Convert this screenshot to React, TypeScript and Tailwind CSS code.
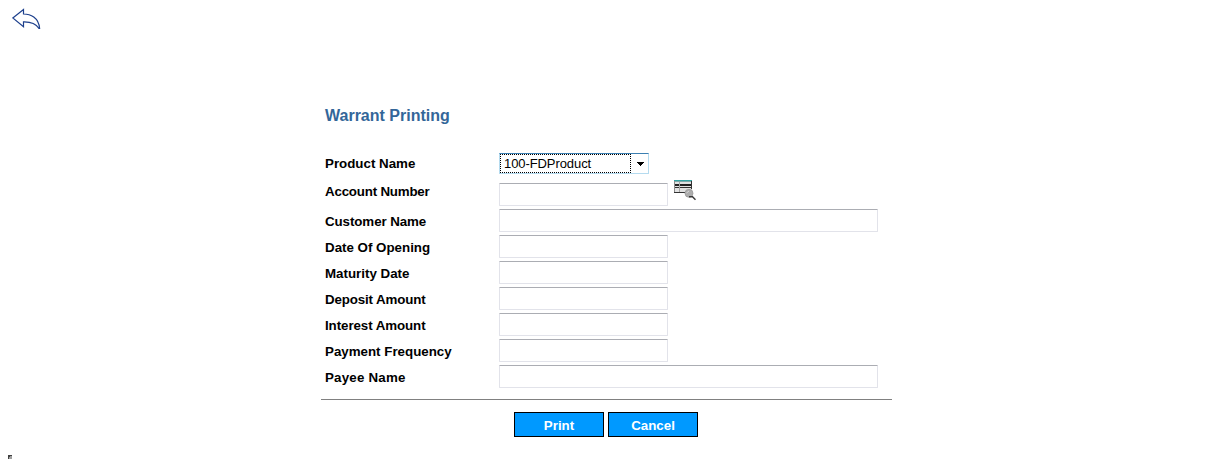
type Row = { label: string; wide?: boolean; tracking?: string };

const rows: Row[] = [
  { label: "Customer Name", wide: true, tracking: "tracking-[-0.08px]" },
  { label: "Date Of Opening" },
  { label: "Maturity Date" },
  { label: "Deposit Amount", tracking: "tracking-[-0.14px]" },
  { label: "Interest Amount", tracking: "tracking-[-0.08px]" },
  { label: "Payment Frequency" },
  { label: "Payee Name", wide: true, tracking: "tracking-[0.2px]" },
];

function Field({ label, wide = false }: { label: string; wide?: boolean }) {
  return (
    <input
      type="text"
      aria-label={label}
      className={
        "block h-[23px] shrink-0 rounded-[1px] border border-[#e2e3ea] border-t-[#abadb3] bg-white px-1 text-[13px] outline-none " +
        (wide ? "w-[379px]" : "w-[169px]")
      }
    />
  );
}

function BackIcon() {
  return (
    <svg width="30" height="22" viewBox="0 0 30 22" fill="none" stroke="#1c3f8c" strokeWidth="1.2">
      <path d="M0.8 10 L11.5 1.5 V6 C18.5 6 26.5 9.5 27.6 20.3 H26.8 C24.5 16.5 20 13.6 11.5 13.8 V18.7 Z" />
    </svg>
  );
}

function LookupIcon() {
  return (
    <svg width="23" height="21" viewBox="0 0 23 21">
      <rect x="0" y="1" width="18" height="12" fill="#e2e2e2" />
      <rect x="0" y="0" width="18" height="1" fill="#35a5a5" />
      <rect x="0" y="1" width="18" height="1" fill="#7fa8a8" />
      <path d="M0.5 1V13" stroke="#8a8a8a" />
      <rect x="1" y="4" width="17" height="2" fill="#222" />
      <rect x="1" y="7" width="16" height="1" fill="#333" />
      <path d="M5.5 2V12" stroke="#a5a5a5" />
      <path d="M0 12.5H11 M17.5 1V9" stroke="#333" />
      <circle cx="15" cy="13.3" r="4" fill="#adadad" stroke="#999" strokeWidth="0.8" />
      <path d="M12.5 13L15 11" stroke="#d5d5d5" />
      <path d="M15 16.7H18.5L21.5 19.8" stroke="#3a3a3a" strokeWidth="1.4" fill="none" />
    </svg>
  );
}

const label = "w-[174px] shrink-0 pl-1 text-[13.33px] leading-[16px] font-bold";
const button =
  "h-[25px] w-[90px] border border-black bg-[#0099ff] pt-[2px] text-[13.33px] leading-[20px] font-bold text-white";

export default function App() {
  return (
    <div className="flex h-[467px] w-[1213px] flex-col overflow-hidden bg-white font-['Liberation_Sans',Arial,sans-serif] text-black">
      <header className="h-[107px] shrink-0 pt-2 pl-[12px]">
        <button type="button" aria-label="Back" className="block">
          <BackIcon />
        </button>
      </header>

      <main className="ml-[321px] flex w-[571px] flex-col">
        <h1 className="h-[46px] pl-1 text-[16px] leading-[18px] font-bold text-[#336699]">Warrant Printing</h1>

        <div className="flex h-[27px]">
          <div className={label + " pt-[3px]"}>Product Name</div>
          <div className="ml-1 flex h-[21px] w-[150px] border border-[#b5dbef] border-t-[#3c7fb1]">
            <div className="flex h-[19px] w-[131px] items-center border border-dotted border-black pl-[3px] text-[13px] leading-[15px] tracking-[-0.08px]">
              100-FDProduct
            </div>
            <div className="flex w-[17px] items-center justify-center pl-px">
              <svg width="7" height="4" viewBox="0 0 7 4" shapeRendering="crispEdges">
                <path d="M0 0H7L3.5 4Z" />
              </svg>
            </div>
          </div>
        </div>

        <div className="flex h-[29px]">
          <div className={label + " pt-1 tracking-[-0.2px]"}>Account Number</div>
          <div className="ml-1 flex">
            <div className="pt-[3px]">
              <Field label="Account Number" />
            </div>
            <button type="button" aria-label="Find account" className="ml-[6px] block self-start">
              <LookupIcon />
            </button>
          </div>
        </div>

        {rows.map((row) => (
          <div key={row.label} className="flex h-[26px]">
            <div className={label + " pt-[5px] " + (row.tracking ?? "")}>{row.label}</div>
            <div className="ml-1">
              <Field label={row.label} wide={row.wide} />
            </div>
          </div>
        ))}

        <div className="mt-2 h-px bg-[#808080]" />

        <div className="mt-3 flex gap-1 pl-[193px]">
          <button type="button" className={button}>Print</button>
          <button type="button" className={button}>Cancel</button>
        </div>
      </main>

      <footer className="mt-auto flex h-[12px] pl-2">
        <svg width="4" height="4" viewBox="0 0 4 4" shapeRendering="crispEdges">
          <rect width="4" height="4" fill="#a0a0a0" />
          <path d="M0 0H4V1H2V2H1V4H0Z" fill="#404040" />
        </svg>
      </footer>
    </div>
  );
}
